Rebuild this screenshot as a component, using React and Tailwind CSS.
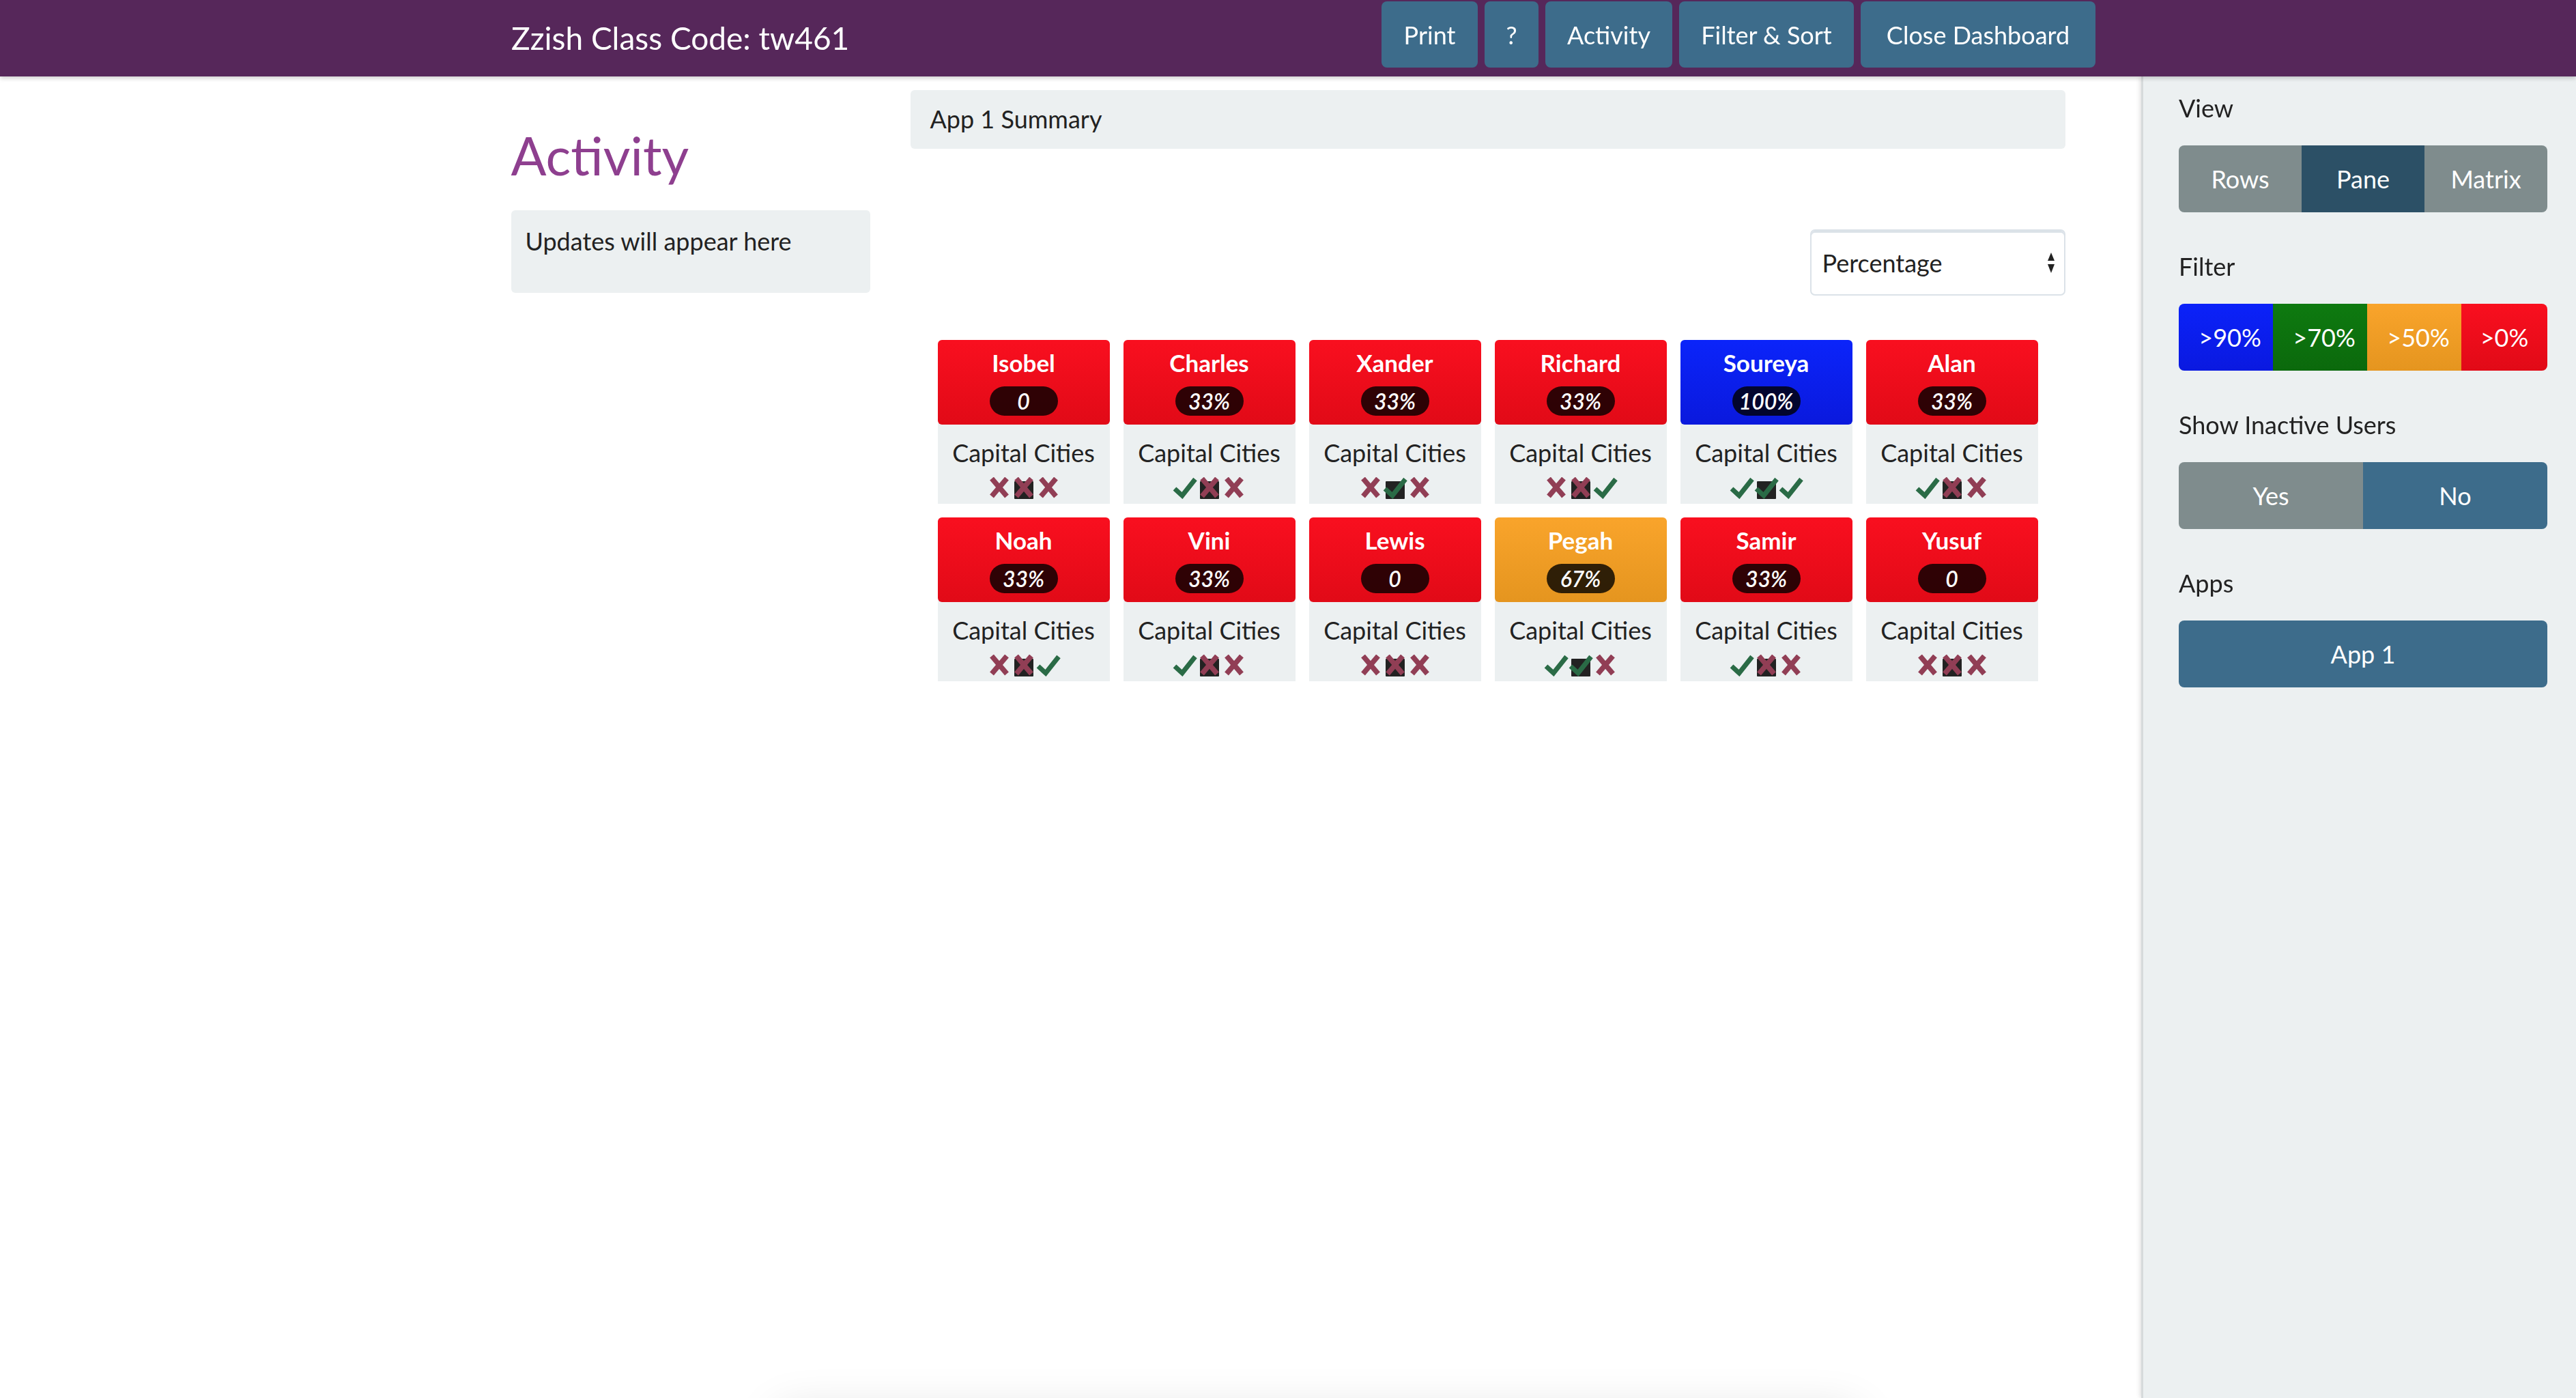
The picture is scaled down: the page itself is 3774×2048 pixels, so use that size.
const HEADER_BUTTONS = [
  { label: 'Print', w: 'w-[141px]' },
  { label: '?', w: 'w-[79px]' },
  { label: 'Activity', w: 'w-[186px]' },
  { label: 'Filter & Sort', w: 'w-[256px]' },
  { label: 'Close Dashboard', w: 'w-[344px]' },
];

const TONES = {
  red: 'bg-linear-to-b from-[#f90f1f] to-[#e10a17]',
  blue: 'bg-linear-to-b from-[#0b24fa] to-[#0a19dd]',
  orange: 'bg-linear-to-b from-[#f9a42b] to-[#e5951f]',
};

const STUDENTS = [
  { name: 'Isobel', score: '0', tone: 'red', marks: ['x', 'x', 'x'] },
  { name: 'Charles', score: '33%', tone: 'red', marks: ['c', 'x', 'x'] },
  { name: 'Xander', score: '33%', tone: 'red', marks: ['x', 'c', 'x'] },
  { name: 'Richard', score: '33%', tone: 'red', marks: ['x', 'x', 'c'] },
  { name: 'Soureya', score: '100%', tone: 'blue', marks: ['c', 'c', 'c'] },
  { name: 'Alan', score: '33%', tone: 'red', marks: ['c', 'x', 'x'] },
  { name: 'Noah', score: '33%', tone: 'red', marks: ['x', 'x', 'c'] },
  { name: 'Vini', score: '33%', tone: 'red', marks: ['c', 'x', 'x'] },
  { name: 'Lewis', score: '0', tone: 'red', marks: ['x', 'x', 'x'] },
  { name: 'Pegah', score: '67%', tone: 'orange', marks: ['c', 'c', 'x'] },
  { name: 'Samir', score: '33%', tone: 'red', marks: ['c', 'x', 'x'] },
  { name: 'Yusuf', score: '0', tone: 'red', marks: ['x', 'x', 'x'] },
];

const Mark = ({ type, current }) => (
  <svg className="w-[36px] h-[32px]" viewBox="0 0 36 32">
    {current && <rect x="4" y="6" width="28" height="26" rx="1" fill="#222" />}
    {type === 'x' ? (
      <g stroke="#913e55" strokeWidth="7.5">
        <path d="M7 2 L29 28" />
        <path d="M29 2 L7 28" />
      </g>
    ) : (
      <polyline points="3,17 14,27 33,3" fill="none" stroke="#2a6b46" strokeWidth="7" strokeLinejoin="miter" />
    )}
  </svg>
);

function StudentCard({ student }) {
  return (
    <div className="w-[252px] rounded-t-[6px] bg-[#ecf0f1]">
      <div className={`${TONES[student.tone]} rounded-[6px] h-[124px] flex flex-col items-center pt-[9px]`}>
        <div className="text-[35px] leading-[49px] font-bold text-white">{student.name}</div>
        <div className="mt-[10px] w-[100px] h-[43px] rounded-full bg-black/80 flex items-center justify-center text-[32px] italic font-semibold text-white">
          {student.score}
        </div>
      </div>
      <div className="h-[116px] flex flex-col items-center pt-[17px]">
        <div className="text-[36px] leading-[49px] text-[#222]">Capital Cities</div>
        <div className="mt-[11px] flex">
          {student.marks.map((m, i) => (
            <Mark key={i} type={m} current={i === 1} />
          ))}
        </div>
      </div>
    </div>
  );
}

function SideSection({ label, children }) {
  return (
    <div className="mb-[55px]">
      <div className="text-[36px] leading-[49px] text-[#222] mb-[30px]">{label}</div>
      <div className="flex h-[98px] rounded-[8px] overflow-hidden text-[36px] text-white">{children}</div>
    </div>
  );
}

export default function App() {
  return (
    <div className="min-h-screen bg-white font-[Lato,sans-serif]">
      {/* Top bar */}
      <header className="h-[112px] bg-[#56275a] shadow-[0_3px_6px_rgba(0,0,0,0.18)] flex justify-between pl-[749px] pr-[704px] relative z-10">
        <div className="self-center text-[46px] leading-none text-white">Zzish Class Code: tw461</div>
        <div className="flex gap-[10px] mt-[2px] h-[97px]">
          {HEADER_BUTTONS.map((b) => (
            <button key={b.label} className={`${b.w} rounded-[8px] bg-[#3d6c8b] text-[36px] text-white`}>
              {b.label}
            </button>
          ))}
        </div>
      </header>

      {/* Content */}
      <main className="mx-auto w-[2277px] pt-[20px] flex gap-[59px] items-start">
        <aside className="w-[526px] pt-[50px]">
          <h1 className="text-[77px] leading-[90px] text-[#8e3f8f]">Activity</h1>
          <div className="mt-[36px] min-h-[121px] rounded-[6px] bg-[#ecf0f1] px-[21px] pt-[21px] text-[36px] leading-[49px] text-[#222]">
            Updates will appear here
          </div>
        </aside>

        <section className="flex-1">
          <div className="h-[86px] rounded-[6px] bg-[#ecf0f1] pl-[29px] pt-[18px] text-[36px] leading-[49px] text-[#222]">
            App 1 Summary
          </div>
          <div className="mt-[118px] flex justify-end">
            <div className="w-[374px] h-[97px] rounded-[7px] border-2 border-[#dbe2e8] shadow-[inset_0_3px_0_#dbe2e8] bg-white flex items-center justify-between pl-[16px] pr-[14px]">
              <span className="text-[36px] text-[#222]">Percentage</span>
              <svg className="w-[10px] h-[30px]" viewBox="0 0 10 30">
                <path d="M5 0 L10 12 L0 12 Z" fill="#222" />
                <path d="M0 17 L10 17 L5 30 Z" fill="#222" />
              </svg>
            </div>
          </div>
          <div className="mt-[65px] grid grid-cols-[repeat(6,252px)] gap-[20px] justify-center">
            {STUDENTS.map((s) => (
              <StudentCard key={s.name} student={s} />
            ))}
          </div>
        </section>
      </main>

      {/* Filter & Sort panel */}
      <div className="fixed right-0 top-[112px] bottom-0 w-[637px] bg-[#ecf0f1] border-l-[3px] border-[#d6dadb] shadow-[-2px_0_6px_rgba(0,0,0,0.12)] pl-[52px] pr-[42px] pt-[22px]">
        <SideSection label="View">
          <div className="flex-1 bg-[#7f8c8d] flex items-center justify-center">Rows</div>
          <div className="flex-1 bg-[#2c5066] flex items-center justify-center">Pane</div>
          <div className="flex-1 bg-[#7f8c8d] flex items-center justify-center">Matrix</div>
        </SideSection>
        <SideSection label="Filter">
          <div className="flex-1 bg-linear-to-b from-[#0b22f9] to-[#0a19e0] flex items-center justify-center pl-[12px]">&gt;90%</div>
          <div className="flex-1 bg-linear-to-b from-[#0e7a10] to-[#0b690c] flex items-center justify-center pl-[12px]">&gt;70%</div>
          <div className="flex-1 bg-linear-to-b from-[#f9a42b] to-[#e5951f] flex items-center justify-center pl-[12px]">&gt;50%</div>
          <div className="flex-1 bg-linear-to-b from-[#f90f1f] to-[#e10a17] flex items-center justify-center">&gt;0%</div>
        </SideSection>
        <SideSection label="Show Inactive Users">
          <div className="flex-1 bg-[#7f8c8d] flex items-center justify-center">Yes</div>
          <div className="flex-1 bg-[#3d6c8b] flex items-center justify-center">No</div>
        </SideSection>
        <SideSection label="Apps">
          <div className="flex-1 bg-[#3d6c8b] flex items-center justify-center">App 1</div>
        </SideSection>
      </div>

      {/* toast peeking from below the fold */}
      <div className="fixed left-[1140px] w-[1580px] top-[2070px] h-[200px] bg-white shadow-[0_0_70px_rgba(0,0,0,0.14)]" />
    </div>
  );
}
